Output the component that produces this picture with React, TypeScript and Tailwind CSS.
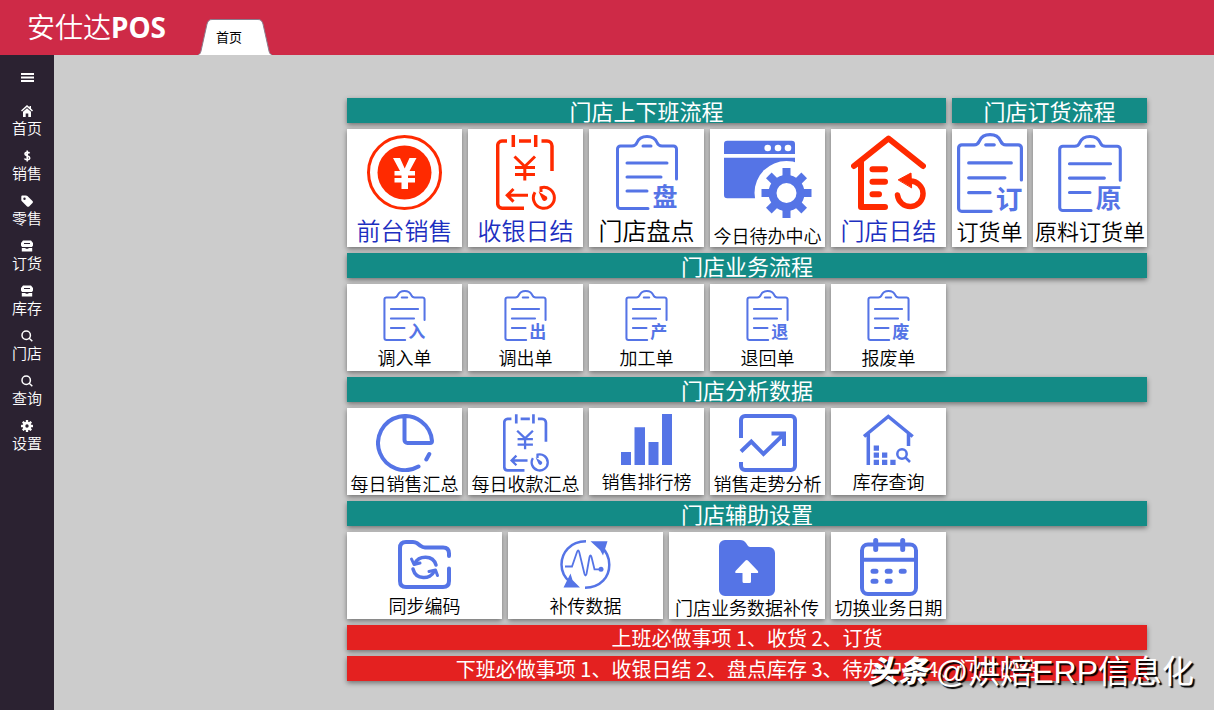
import type { ReactNode } from 'react';
import clsx from 'clsx';

const BLUE = '#5574e6';
const RED = '#ff2a00';

type IconProps = { className?: string; color?: string };

function Clipboard({ mark, className }: { mark: string; className: string }) {
  return (
    <svg viewBox="0 0 62 75" className={clsx('overflow-visible', className)} fill="none" stroke={BLUE} strokeWidth="3" strokeLinecap="round" aria-hidden="true">
      <path d="M60.5 44V14a3 3 0 0 0-3-3H46c-3 0-4-1-5-3.500C39.500 4 35.500 1.500 31 1.500S22.500 4 21 7.500C20 10 19 11 16 11H4.500a3 3 0 0 0-3 3v56.500a3 3 0 0 0 3 3H32" />
      <path d="M27 11h8M11 28h40M11 42h34M11 56h20" />
      <text x="49" y="71" textAnchor="middle" fontSize="25" fontWeight="700" fill={BLUE} stroke="none">{mark}</text>
    </svg>
  );
}

function Coin({ className }: IconProps) {
  return (
    <svg viewBox="0 0 75 75" className={className} aria-hidden="true">
      <circle cx="37.5" cy="37.5" r="36" fill="none" stroke={RED} strokeWidth="3" />
      <circle cx="37.500" cy="37.500" r="27" fill={RED} />
      <path d="M26 23h7l4.700 10.500L42.500 23h7l-7 13H48v4.500h-7V43h7v4.500h-7V54h-6.500v-6.500h-7V43h7v-2.500h-7V36H33z" fill="#fff" />
    </svg>
  );
}

function CashCalendar({ className, color = BLUE }: IconProps) {
  return (
    <svg viewBox="0 0 60 75" className={className} fill="none" stroke={color} strokeWidth="3.500" aria-hidden="true">
      <path d="M11 6H6a4.500 4.500 0 0 0-4.300 4.500V69A4.500 4.500 0 0 0 6 73.200h22M17.300 0v12M23 6h12M39.700 0v12M45.500 6H51a5 5 0 0 1 5 5v25" />
      <path d="M18.500 21.500 28.800 31.500 39 21.500M28.800 31v14.500M19 32.500h20M19 39.500h20" strokeWidth="3" />
      <path d="M32 60.300H11.500M17.500 54l-6.300 6.300 6.300 6.300" strokeWidth="3" />
      <path d="M45 57v-4.300a10.500 10.500 0 1 1-6 4.500" strokeWidth="3" />
      <path d="m42.500 56.500 8 5a2.600 2.600 0 1 1-4 3.500z" fill={color} stroke="none" />
    </svg>
  );
}

const TEETH = [0, 45, 90, 135, 180, 225, 270, 315];

function WindowGear({ className }: IconProps) {
  return (
    <svg viewBox="0 0 88 86" className={className} fill={BLUE} aria-hidden="true">
      <path d="M0 19V9a3.300 3.300 0 0 1 3.300-3.300h64.400A3.300 3.300 0 0 1 71 9v10zM0 22.700h71V63.300H3.300A3.300 3.300 0 0 1 0 60z" />
      <circle cx="43.700" cy="13" r="3.300" fill="#fff" />
      <circle cx="54" cy="13" r="3.300" fill="#fff" />
      <circle cx="64" cy="13" r="3.300" fill="#fff" />
      <circle cx="62.500" cy="58" r="32" fill="#fff" />
      {TEETH.map((a) => (
        <rect key={a} x="58.500" y="33" width="8" height="12" transform={`rotate(${a} 62.5 58)`} />
      ))}
      <circle cx="62.500" cy="58" r="14" fill="none" stroke={BLUE} strokeWidth="8" />
    </svg>
  );
}

function HouseReturn({ className }: IconProps) {
  return (
    <svg viewBox="0 0 75 75" className={className} fill="none" stroke={RED} strokeWidth="6" strokeLinecap="round" strokeLinejoin="round" aria-hidden="true">
      <path d="M3 31 37.500 3.500 72 31M10 27v45h24M21.500 34.300H34M21.500 46.700H34M21.500 59.300H28" />
      <path d="M46.500 60a12.800 12.800 0 1 0 12.800-14" strokeWidth="5.500" />
      <path d="M47.500 44.700 60 38l.6 14.500z" fill={RED} strokeWidth="1" />
    </svg>
  );
}

function Pie({ className }: IconProps) {
  return (
    <svg viewBox="0 0 58 58" className={className} fill="none" stroke={BLUE} strokeWidth="4" strokeLinecap="round" strokeLinejoin="round" aria-hidden="true">
      <path d="M42.500 52.500A27 27 0 1 1 56 27c0 1.500-.5 2-2 2H31.500a3 3 0 0 1-3-3V3M53.300 40 50.300 45.500" />
    </svg>
  );
}

function Bars({ className }: IconProps) {
  return (
    <svg viewBox="0 0 51 51" className={className} fill={BLUE} aria-hidden="true">
      <path d="M0 38h10v13H0zM13.500 13.300h10.500V51H13.500zM27.500 28h10v23h-10zM41 0h10v51H41z" />
    </svg>
  );
}

function Trend({ className }: IconProps) {
  return (
    <svg viewBox="0 0 58 58" className={className} fill="none" stroke={BLUE} strokeWidth="4" aria-hidden="true">
      <path d="M2 24V6a4 4 0 0 1 4-4h46a4 4 0 0 1 4 4v46a4 4 0 0 1-4 4H6a4 4 0 0 1-4-4v-4" />
      <path d="M2 37.500 12.300 27.500 24.500 40 45 20M32.500 19.500H45v12.500" />
    </svg>
  );
}

function HouseSearch({ className }: IconProps) {
  return (
    <svg viewBox="0 0 51 51" className={className} fill="none" stroke={BLUE} strokeWidth="3.500" aria-hidden="true">
      <path d="M1 22.500 25.300 2.500 49.700 22.500M5.300 20v31M45.500 20v12" />
      <path d="M10.700 31.500h5.300v5.300h-5.300zM10.700 38.500h5.300v5.300h-5.300zM19 38.500h5.300v5.300H19zM10.700 45.700h5.300V51h-5.300zM19 45.700h5.300V51H19zM27.300 45.700h5.300V51h-5.300z" fill={BLUE} stroke="none" />
      <circle cx="39" cy="40" r="4.700" strokeWidth="2.500" />
      <path d="m42.500 43.500 4.500 4.500" strokeWidth="2.500" />
    </svg>
  );
}

function FolderSync({ className }: IconProps) {
  return (
    <svg viewBox="0 0 53 49" className={className} fill="none" stroke={BLUE} strokeWidth="4" strokeLinecap="round" aria-hidden="true">
      <path d="M51 16v-2.500c0-4-2-6-6-6H27c-2 0-3-.5-4.500-1.700L19 3.200C17.500 2.200 16.500 2 15 2H8C4 2 2 4 2 8v33c0 4 2 6 6 6h37c4 0 6-2 6-6V28.500" />
      <path d="M17 23.500c3.500-8 18-9 21 1.500M36 31.500c-3.500 8-18 9-21-2.500" strokeWidth="3.500" />
      <path d="m13.500 19 2.500 5.500 6-1.500M39.500 35.500l-2-5.500-6.500 1.500" strokeWidth="3" strokeLinejoin="round" />
    </svg>
  );
}

function PulseCycle({ className }: IconProps) {
  return (
    <svg viewBox="0 0 51 49" className={className} fill="none" stroke={BLUE} strokeWidth="2.500" aria-hidden="true">
      <path d="M26 1.300C10 1.300 1.500 13 1.500 24.500c0 8 4 14 9 18M25 47.700c16 0 24.300-11 24.300-23C49.300 17 46 11 41 6.500" />
      <path d="M30.500 1.300h17L43 15.500 40 10zM20 47.500H3.500L10.500 33.500l2 6.500z" fill={BLUE} stroke="none" />
      <path d="M5 26.500h7L17 12q1.200-3 2.200 0l5.300 22q1 3 2 0L29.500 17q1-3 2 0L34.500 29.300h7" strokeWidth="1.800" />
      <circle cx="41" cy="29.300" r="2.500" fill={BLUE} stroke="none" />
    </svg>
  );
}

function FolderUp({ className }: IconProps) {
  return (
    <svg viewBox="0 0 56 56" className={className} aria-hidden="true">
      <path d="M6 0h15c3 0 4.500 1 6 3l1.500 2.200C29.600 6.700 30.500 7 32.500 7H50a6 6 0 0 1 6 6v37a6 6 0 0 1-6 6H6a6 6 0 0 1-6-6V6a6 6 0 0 1 6-6z" fill={BLUE} />
      <path d="M26.500 20.500q1.200-1 2.400 0l10 10.500q1 2-1 2H32v8.500q0 1.500-1.500 1.500h-5.500q-1.500 0-1.500-1.500V33H17.500q-2 0-1-2z" fill="#fff" />
    </svg>
  );
}

function DateCalendar({ className }: IconProps) {
  return (
    <svg viewBox="0 0 58 58" className={className} fill="none" stroke={BLUE} strokeWidth="4" strokeLinecap="round" aria-hidden="true">
      <rect x="2" y="6.500" width="54" height="49.500" rx="6" />
      <path d="M2 21.700h54" />
      <path d="M15.700 2.500v9M42.700 2.500v9M13 33.200h3M27.200 33.200h3M41.200 33.200h3M13 43.300h3M27.200 43.300h3" strokeWidth="5" />
    </svg>
  );
}

const SIDE_ICONS: Record<string, ReactNode> = {
  home: <path d="M6 0 0 5.500l1 1L6 2l5 4.500 1-1-2-1.900V1H8.500v1.300zM6 3.200 2 6.800V12h2.700V8.500h2.600V12H10V6.800z" />,
  money: <path d="M8.500 3.300C8 2.200 4 1.800 4 4c0 2.200 4.700 1.500 4.700 4 0 2.300-4.500 2.200-5.200.5M6.200.5v11" fill="none" stroke="currentColor" strokeWidth="1.600" />,
  tag: <path fillRule="evenodd" d="M1.500.5H5c.5 0 1 .2 1.400.6L11.500 6c.6.600.6 1.300 0 1.900l-3.400 3.500c-.6.600-1.400.6-2 0L.9 6.300C.5 5.900.3 5.500.3 5V1.700C.3 1 .8.500 1.500.5zM3.500 2.500a1.200 1.200 0 1 0 0 2.400 1.200 1.200 0 0 0 0-2.400z" />,
  box: <path fillRule="evenodd" d="M2 .5h8L12 3v2.500L11 7H1L0 5.500V3zM3 3v1h6V3zM.8 8h3.400l.8.8h2L7.800 8h3.400v3.500H.8z" />,
  search: <path d="M5.200 1a4.200 4.200 0 1 1 0 8.400 4.200 4.200 0 0 1 0-8.400zM8.300 8.300l3 3" fill="none" stroke="currentColor" strokeWidth="1.500" />,
  gear: (
    <>
      {TEETH.map((a) => (
        <rect key={a} x="4.800" y="0" width="2.400" height="3" rx=".5" transform={`rotate(${a} 6 6)`} />
      ))}
      <circle cx="6" cy="6" r="3" fill="none" stroke="currentColor" strokeWidth="2.600" />
    </>
  ),
};

const MENU = [
  { label: '首页', icon: 'home' },
  { label: '销售', icon: 'money' },
  { label: '零售', icon: 'tag' },
  { label: '订货', icon: 'box' },
  { label: '库存', icon: 'box' },
  { label: '门店', icon: 'search' },
  { label: '查询', icon: 'search' },
  { label: '设置', icon: 'gear' },
];

function Heading({ children, className }: { children: ReactNode; className?: string }) {
  return (
    <h2 className={clsx('h-[25px] bg-[#138b86] text-center text-[22px] leading-6 text-white shadow-[0_2px_5px_rgba(0,0,0,0.45)]', className)}>
      {children}
    </h2>
  );
}

function Notice({ children }: { children: ReactNode }) {
  return (
    <p className="h-[25px] whitespace-nowrap bg-[#e42120] text-center text-[20px] leading-[26px] text-white shadow-[0_2px_5px_rgba(0,0,0,0.45)]">
      {children}
    </p>
  );
}

type TileProps = {
  label: string;
  icon: ReactNode;
  box?: string;
  text?: string;
};

function Tile({ label, icon, box = 'h-[87px] w-[115px] pt-1.5', text = 'text-[18px] leading-7 text-black' }: TileProps) {
  return (
    <button type="button" className={clsx('flex shrink-0 cursor-pointer flex-col items-center justify-between bg-white shadow-[0_2px_5px_rgba(0,0,0,0.45)]', box)}>
      {icon}
      <span className={clsx('whitespace-nowrap font-[350]', text)}>{label}</span>
    </button>
  );
}

const TALL = 'h-[118px] w-[115px] pt-1.5';
const WIDE = 'h-[87px] w-[155px] pt-2';
const LOW = 'text-[18px] leading-[23px] text-black';

export default function App() {
  return (
    <div className="relative flex min-h-screen flex-col bg-[#ccc] font-['Noto_Sans_CJK_SC',sans-serif]">
      <header className="flex h-[55px] items-end bg-[#ce2a47] pl-[27px]">
        <h1 className="mb-2 w-[171px] text-[28px] font-[350] leading-10 text-white">
          安仕达<span className="font-['Noto_Sans',sans-serif] font-bold">POS</span>
        </h1>
        <button type="button" className="relative h-9 w-[74px] cursor-pointer pl-[18px] text-left text-[13px] leading-8 text-black">
          <svg viewBox="0 0 74 36" className="absolute inset-0 h-9 w-[74px]" aria-hidden="true">
            <path d="M0 36c2-1 2.500-2 3-4L9 5c1-3 2-4.500 5-4.500h46c3 0 4 1.500 5 4.500l6 27c.5 2 1 3 3 4z" fill="#fff" />
            <path d="M0 36c2-1 2.500-2 3-4L9 5c1-3 2-4.500 5-4.500h46c3 0 4 1.500 5 4.500l6 27c.5 2 1 3 3 4" fill="none" stroke="#8b7b8c" />
          </svg>
          <span className="relative">首页</span>
        </button>
      </header>

      <div className="flex flex-1">
        <aside className="w-[54px] shrink-0 bg-[#2b2231] pt-4 text-white">
          <button type="button" aria-label="菜单" className="mx-auto block h-3 w-[13px] cursor-pointer">
            <svg viewBox="0 0 13 12" className="h-3 w-[13px]" stroke="currentColor" strokeWidth="2" aria-hidden="true">
              <path d="M0 3h13M0 6.500h13M0 10h13" />
            </svg>
          </button>
          <nav className="mt-[18px]">
            {MENU.map((m) => (
              <a key={m.label} href="#" className="flex h-[45px] flex-col items-center pt-1">
                <svg viewBox="0 0 12 12" className="h-3 w-3 shrink-0" fill="currentColor" aria-hidden="true">
                  {SIDE_ICONS[m.icon]}
                </svg>
                <span className="text-[15px] font-[350] leading-[22px]">{m.label}</span>
              </a>
            ))}
          </nav>
        </aside>

        <main className="flex-1 pb-7 pl-[293px] pt-[43px]">
          <div className="flex w-[800px] flex-col gap-1.5">
            <div className="flex gap-1.5">
              <section className="flex flex-col gap-1.5">
                <Heading>门店上下班流程</Heading>
                <div className="flex gap-1.5">
                  <Tile box={TALL} text="text-[24px] leading-[34px] text-[#1d2fc0]" label="前台销售" icon={<Coin className="size-[75px]" />} />
                  <Tile box={TALL} text="text-[24px] leading-[34px] text-[#1d2fc0]" label="收银日结" icon={<CashCalendar color={RED} className="h-[75px] w-[60px]" />} />
                  <Tile box={TALL} text="text-[24px] leading-[34px] text-black" label="门店盘点" icon={<Clipboard mark="盘" className="h-[75px] w-[62px]" />} />
                  <Tile box={TALL} text={LOW} label="今日待办中心" icon={<WindowGear className="h-[86px] w-[88px]" />} />
                  <Tile box={TALL} text="text-[24px] leading-[34px] text-[#1d2fc0]" label="门店日结" icon={<HouseReturn className="size-[75px]" />} />
                </div>
              </section>
              <section className="flex flex-1 flex-col gap-1.5">
                <Heading>门店订货流程</Heading>
                <div className="flex gap-1.5">
                  <Tile box="h-[118px] w-[75px] pt-1" text="text-[22px] leading-[34px] text-black" label="订货单" icon={<Clipboard mark="订" className="h-20 w-[66px]" />} />
                  <Tile box="h-[118px] flex-1 pt-1.5" text="text-[22px] leading-[34px] text-black" label="原料订货单" icon={<Clipboard mark="原" className="h-[77px] w-16" />} />
                </div>
              </section>
            </div>

            <Heading>门店业务流程</Heading>
            <div className="flex gap-1.5">
              <Tile label="调入单" icon={<Clipboard mark="入" className="h-[51px] w-[43px]" />} />
              <Tile label="调出单" icon={<Clipboard mark="出" className="h-[51px] w-[43px]" />} />
              <Tile label="加工单" icon={<Clipboard mark="产" className="h-[51px] w-[43px]" />} />
              <Tile label="退回单" icon={<Clipboard mark="退" className="h-[51px] w-[43px]" />} />
              <Tile label="报废单" icon={<Clipboard mark="废" className="h-[51px] w-[43px]" />} />
            </div>

            <Heading>门店分析数据</Heading>
            <div className="flex gap-1.5">
              <Tile text={LOW} label="每日销售汇总" icon={<Pie className="size-[58px]" />} />
              <Tile text={LOW} label="每日收款汇总" icon={<CashCalendar className="h-[58px] w-[46px]" />} />
              <Tile label="销售排行榜" icon={<Bars className="size-[51px]" />} />
              <Tile text={LOW} label="销售走势分析" icon={<Trend className="size-[58px]" />} />
              <Tile label="库存查询" icon={<HouseSearch className="size-[51px]" />} />
            </div>

            <Heading>门店辅助设置</Heading>
            <div className="flex gap-1.5">
              <Tile box={WIDE} label="同步编码" icon={<FolderSync className="h-[49px] w-[53px]" />} />
              <Tile box={WIDE} label="补传数据" icon={<PulseCycle className="h-[49px] w-[51px]" />} />
              <Tile box="h-[87px] w-[156px] pt-2" text={LOW} label="门店业务数据补传" icon={<FolderUp className="size-14" />} />
              <Tile text={LOW} label="切换业务日期" icon={<DateCalendar className="size-[58px]" />} />
            </div>

            <Notice>上班必做事项 1、收货 2、订货</Notice>
            <Notice>下班必做事项 1、收银日结 2、盘点库存 3、待办中心 4、门店日结</Notice>
          </div>
        </main>
      </div>

      <div className="pointer-events-none absolute bottom-[18px] right-5 flex items-center gap-2 whitespace-nowrap font-['Liberation_Sans','Noto_Sans_CJK_SC',sans-serif] text-[32px] leading-10 text-white [text-shadow:2px_2px_1px_#000]">
        <span className="text-[30px] font-black italic">头条</span>
        <span>@烘焙ERP信息化</span>
      </div>
    </div>
  );
}
